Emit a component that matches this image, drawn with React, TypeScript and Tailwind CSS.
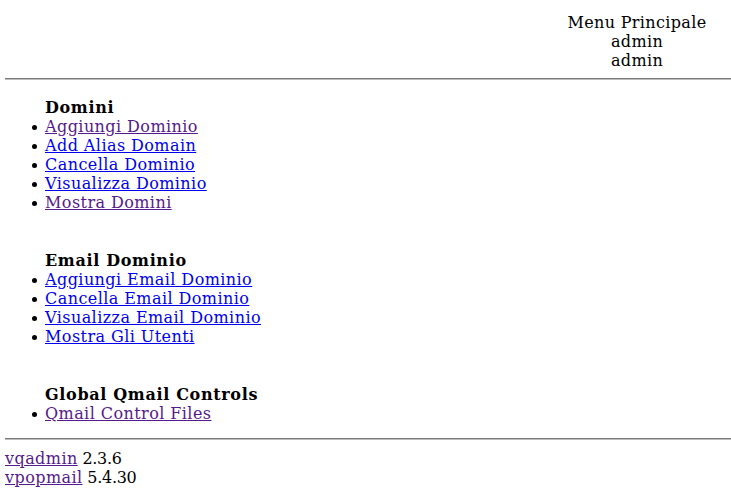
import React from "react";

const visited = "text-[#551A8B] underline";
const link = "text-[#0000EE] underline";

function Section({ title, items }: { title: string; items: { label: string; v?: boolean }[] }) {
  return (
    <div className="pl-10">
      <div className="font-bold tracking-[0.66px]">{title}</div>
      <ul className="list-none">
        {items.map((it) => (
          <li key={it.label} className="relative">
            <span className="absolute left-[-13px] top-[8px] w-[5px] h-[5px] rounded-full bg-black" />
            <a href="#" className={it.v ? visited : link}>
              {it.label}
            </a>
          </li>
        ))}
      </ul>
    </div>
  );
}

export default function App() {
  return (
    <div
      className="bg-white text-black text-[16px] leading-[19px] tracking-[0.43px] px-[5px] pt-[13px] min-h-[500px]"
      style={{ fontFamily: '"DejaVu Serif", serif' }}
    >
      <div className="flex justify-end">
        <div className="w-[178px] text-center tracking-[0.35px]">
          <div>Menu Principale</div>
          <div>admin</div>
          <div>admin</div>
        </div>
      </div>
      <div className="mt-[8px] mr-[-5px] h-[2px] border-t border-t-[#7b7b7b] border-b border-b-[#bdbdbd]" />
      <div className="mt-[18px]">
        <Section
          title="Domini"
          items={[
            { label: "Aggiungi Dominio", v: true },
            { label: "Add Alias Domain" },
            { label: "Cancella Dominio" },
            { label: "Visualizza Dominio" },
            { label: "Mostra Domini", v: true },
          ]}
        />
      </div>
      <div className="mt-[39px]">
        <Section
          title="Email Dominio"
          items={[
            { label: "Aggiungi Email Dominio" },
            { label: "Cancella Email Dominio" },
            { label: "Visualizza Email Dominio" },
            { label: "Mostra Gli Utenti" },
          ]}
        />
      </div>
      <div className="mt-[39px]">
        <Section title="Global Qmail Controls" items={[{ label: "Qmail Control Files", v: true }]} />
      </div>
      <div className="mt-[15px] mr-[-5px] h-[2px] border-t border-t-[#7b7b7b] border-b border-b-[#bdbdbd]" />
      <div className="mt-[9px]">
        <div>
          <a href="#" className={visited}>vqadmin</a>
          <span className="tracking-[-0.3px]"> 2.3.6</span>
        </div>
        <div>
          <a href="#" className={visited}>vpopmail</a>
          <span className="tracking-[-0.3px]"> 5.4.30</span>
        </div>
      </div>
    </div>
  );
}
